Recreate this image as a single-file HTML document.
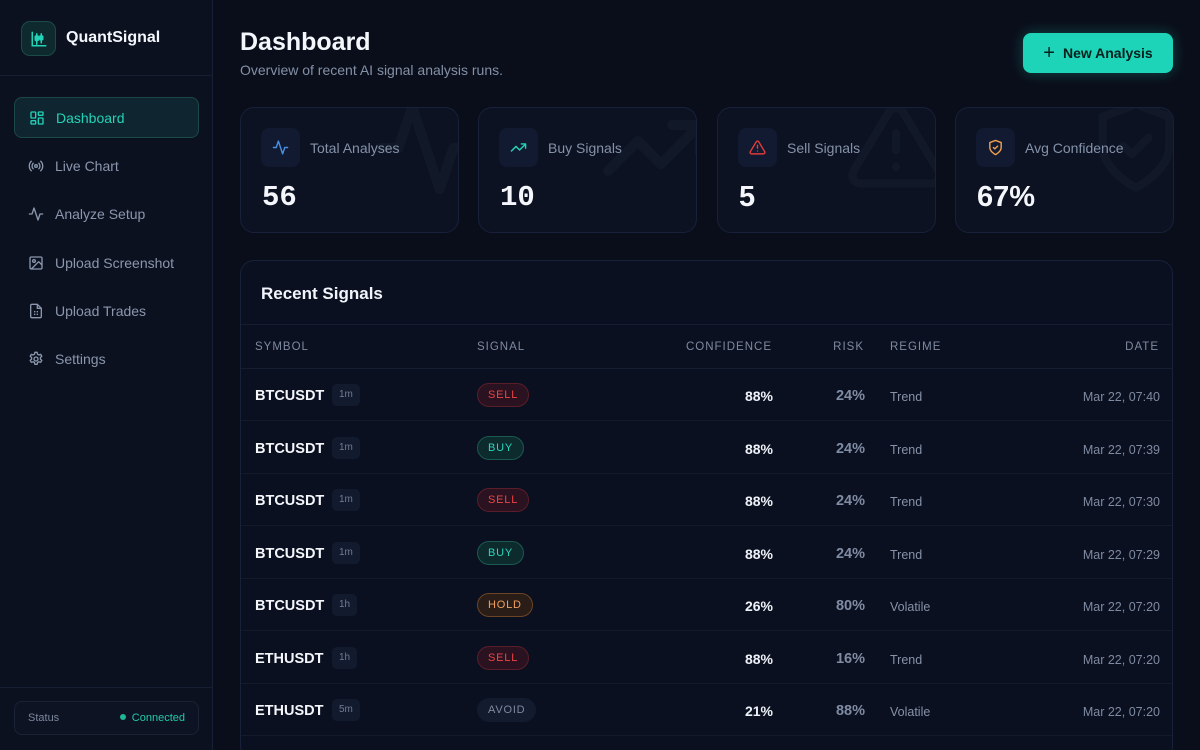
<!DOCTYPE html>
<html><head><meta charset="utf-8"><style>
*{box-sizing:border-box;margin:0;padding:0}
html,body{width:1200px;height:750px;overflow:hidden}
body{background:#0a0e1a;font-family:"Liberation Sans",sans-serif;color:#e6ebf5;position:relative}
.sb{position:absolute;left:0;top:0;width:213px;height:750px;background:#0c1120;border-right:1px solid #182036}
.logo{position:absolute;left:21px;top:21px;width:35px;height:35px;border-radius:9px;background:#0f2a2e;border:1px solid #1c4a4a;display:flex;align-items:center;justify-content:center}
.brand{position:absolute;left:66px;top:29px;font-weight:bold;font-size:16px;color:#f3f6fb}
.sep{position:absolute;left:0;top:75px;width:212px;height:1px;background:#161e32}
.nav{position:absolute;left:14px;width:185px;height:41px;display:flex;align-items:center;padding-left:14px;font-size:14px;color:#8a97ad}
.nav svg{margin-right:11px}
.nav.act{background:#0f2630;border:1px solid #1b4848;border-radius:8px;color:#22d3b8}
.status{position:absolute;left:14px;top:701px;width:185px;height:34px;border:1px solid #1a2236;border-radius:8px;background:#0d1323;font-size:11px;color:#7b879c;display:flex;align-items:center;justify-content:space-between;padding:0 13px}
.status b{font-weight:normal;color:#22c9a8}
.status b:before{content:"";display:inline-block;width:6px;height:6px;border-radius:3px;background:#1fb593;margin-right:6px;vertical-align:1px}
.sep2{position:absolute;left:0;top:687px;width:212px;height:1px;background:#161e32}
h1{position:absolute;left:240px;top:28px;font-size:25px;font-weight:bold;color:#f3f6fb}
.sub{position:absolute;left:240px;top:62px;font-size:14px;color:#8390a6}
.btn{position:absolute;left:1023px;top:33px;width:150px;height:40px;border-radius:8px;background:#1dd3b8;color:#06201c;font-weight:bold;font-size:14px;display:flex;align-items:center;justify-content:center;box-shadow:0 0 14px rgba(29,211,184,.3)}
.card{position:absolute;top:107px;width:219px;height:126px;border:1px solid #18213a;border-radius:14px;background:#0c1222;overflow:hidden}
.ic{position:absolute;left:20px;top:20px;width:39px;height:39px;border-radius:8px;background:#111a30;display:flex;align-items:center;justify-content:center}
.cl{position:absolute;left:69px;top:32px;font-size:14px;color:#8492a9}
.cv{position:absolute;left:21px;top:73px;font-size:29px;font-weight:bold;color:#f4f6fb}
.mono{font-family:"Liberation Mono",monospace}
.bg{position:absolute}
.panel{position:absolute;left:240px;top:260px;width:933px;height:500px;border:1px solid #18213a;border-radius:14px;background:#0b1020;overflow:hidden}
.pt{position:absolute;left:20px;top:23px;font-size:17px;font-weight:bold;color:#f1f4fa}
.hl{position:absolute;left:0;width:933px;height:1px;background:#151d31}
.th{position:absolute;top:80px;font-size:11.5px;letter-spacing:1px;color:#7e8aa0}
.row{position:absolute;left:0;width:933px;height:52px;border-bottom:1px solid #131a2c}
.row>*{position:absolute}
.sym{left:14px;top:19px;font-weight:bold;font-size:14.5px;color:#f4f6fb}
.tf{top:15px;height:22px;padding:0 7px;border-radius:5px;background:#121a2e;color:#6f7c93;font-size:10px;line-height:22px}
.pill{left:236px;top:14px;height:24px;padding:0 10px;border-radius:12px;font-size:11px;letter-spacing:.8px;line-height:22px;border:1px solid}
.sell{background:#2a1220;border-color:#5a1e2a;color:#ef4444}
.buy{background:#0d2a2c;border-color:#1a5a52;color:#2dd4bf}
.hold{background:#2a1c16;border-color:#6b4526;color:#f0a060}
.avoid{background:#131b2e;border-color:#131b2e;color:#7e8aa0}
.conf{right:401px;top:19px;font-weight:bold;font-size:14px;color:#eef2f8}
.risk{right:309px;top:19px;font-size:14.5px;font-weight:bold;color:#7f8ca3}
.reg{left:649px;top:21px;font-size:12.5px;color:#8592a8}
.dt{right:14px;top:21px;font-size:12.5px;color:#7e8aa0}
</style></head><body>
<div class="sb">
<div class="logo"><svg width="18" height="18" viewBox="0 0 24 24" fill="none" stroke="#22d3b8" stroke-width="2" stroke-linecap="round"><path d="M3 3v18h18"/><path d="M9 5v14M15 5v12"/><rect x="7" y="8" width="4" height="6" rx="1"/><rect x="13" y="8" width="4" height="5" rx="1"/></svg></div>
<div class="brand">QuantSignal</div>
<div class="sep"></div>
<div class="nav act" style="top:97px"><svg width="16" height="16" viewBox="0 0 24 24" fill="none" stroke="#22d3b8" stroke-width="2"><rect x="3" y="3" width="7" height="9" rx="1"/><rect x="14" y="3" width="7" height="5" rx="1"/><rect x="14" y="12" width="7" height="9" rx="1"/><rect x="3" y="16" width="7" height="5" rx="1"/></svg>Dashboard</div>
<div class="nav" style="top:145px"><svg width="16" height="16" viewBox="0 0 24 24" fill="none" stroke="#8a97ad" stroke-width="2" stroke-linecap="round"><circle cx="12" cy="12" r="2"/><path d="M16.2 7.8a6 6 0 0 1 0 8.4M7.8 16.2a6 6 0 0 1 0-8.4M19.1 4.9a10 10 0 0 1 0 14.2M4.9 19.1a10 10 0 0 1 0-14.2"/></svg>Live Chart</div>
<div class="nav" style="top:193px"><svg width="16" height="16" viewBox="0 0 24 24" fill="none" stroke="#8a97ad" stroke-width="2" stroke-linecap="round" stroke-linejoin="round"><path d="M22 12h-4l-3 9L9 3l-3 9H2"/></svg>Analyze Setup</div>
<div class="nav" style="top:242px"><svg width="16" height="16" viewBox="0 0 24 24" fill="none" stroke="#8a97ad" stroke-width="2" stroke-linejoin="round"><rect x="3" y="3" width="18" height="18" rx="2"/><circle cx="9" cy="9" r="2"/><path d="M21 15l-5-5L5 21"/></svg>Upload Screenshot</div>
<div class="nav" style="top:290px"><svg width="16" height="16" viewBox="0 0 24 24" fill="none" stroke="#8a97ad" stroke-width="2" stroke-linejoin="round"><path d="M14 2H6a2 2 0 0 0-2 2v16a2 2 0 0 0 2 2h12a2 2 0 0 0 2-2V8z"/><path d="M14 2v6h6M9 13h2M13 13h2M9 17h2M13 17h2"/></svg>Upload Trades</div>
<div class="nav" style="top:338px"><svg width="16" height="16" viewBox="0 0 24 24" fill="none" stroke="#8a97ad" stroke-width="2" stroke-linejoin="round"><circle cx="12" cy="12" r="3"/><path d="M10.3 2h3.4l.6 2.8 2 1.1 2.7-.9 1.7 2.9-2.1 1.9v2.4l2.1 1.9-1.7 2.9-2.7-.9-2 1.1-.6 2.8h-3.4l-.6-2.8-2-1.1-2.7.9-1.7-2.9 2.1-1.9v-2.4L3.3 7.9 5 5l2.7.9 2-1.1z"/></svg>Settings</div>
<div class="sep2"></div>
<div class="status"><span>Status</span><b>Connected</b></div>
</div>

<h1>Dashboard</h1>
<div class="sub">Overview of recent AI signal analysis runs.</div>
<div class="btn"><span style="font-size:20px;font-weight:normal;margin-right:8px;line-height:1">+</span>New Analysis</div>

<div class="card" style="left:240px"><svg class="bg" style="left:130px;top:-15px" width="110" height="110" viewBox="0 0 24 24" fill="none" stroke="#111828" stroke-width="2.2" stroke-linecap="round" stroke-linejoin="round"><path d="M22 12h-4l-3 9L9 3l-3 9H2"/></svg>
<div class="ic"><svg width="17" height="17" viewBox="0 0 24 24" fill="none" stroke="#4a8ee0" stroke-width="2" stroke-linecap="round" stroke-linejoin="round"><path d="M22 12h-4l-3 9L9 3l-3 9H2"/></svg></div><div class="cl">Total Analyses</div><div class="cv mono">56</div></div>
<div class="card" style="left:478px"><svg class="bg" style="left:120px;top:-15px" width="110" height="110" viewBox="0 0 24 24" fill="none" stroke="#111828" stroke-width="2.2" stroke-linecap="round" stroke-linejoin="round"><path d="M22 7l-8.5 8.5-5-5L2 17M16 7h6v6"/></svg>
<div class="ic"><svg width="17" height="17" viewBox="0 0 24 24" fill="none" stroke="#22d3b8" stroke-width="2" stroke-linecap="round" stroke-linejoin="round"><path d="M22 7l-8.5 8.5-5-5L2 17M16 7h6v6"/></svg></div><div class="cl">Buy Signals</div><div class="cv mono">10</div></div>
<div class="card" style="left:717px"><svg class="bg" style="left:128px;top:-12px" width="100" height="100" viewBox="0 0 24 24" fill="none" stroke="#111828" stroke-width="2" stroke-linecap="round" stroke-linejoin="round"><path d="M10.3 3.9L1.8 18a2 2 0 0 0 1.7 3h17a2 2 0 0 0 1.7-3L13.7 3.9a2 2 0 0 0-3.4 0zM12 9v4M12 17h.01"/></svg>
<div class="ic"><svg width="17" height="17" viewBox="0 0 24 24" fill="none" stroke="#e03a3a" stroke-width="2" stroke-linecap="round" stroke-linejoin="round"><path d="M10.3 3.9L1.8 18a2 2 0 0 0 1.7 3h17a2 2 0 0 0 1.7-3L13.7 3.9a2 2 0 0 0-3.4 0zM12 9v4M12 17h.01"/></svg></div><div class="cl">Sell Signals</div><div class="cv">5</div></div>
<div class="card" style="left:955px"><svg class="bg" style="left:130px;top:-12px" width="100" height="100" viewBox="0 0 24 24" fill="none" stroke="#111828" stroke-width="2" stroke-linecap="round" stroke-linejoin="round"><path d="M12 22s8-4 8-10V5l-8-3-8 3v7c0 6 8 10 8 10z"/><path d="M9 12l2 2 4-4"/></svg>
<div class="ic"><svg width="17" height="17" viewBox="0 0 24 24" fill="none" stroke="#f0a050" stroke-width="2" stroke-linecap="round" stroke-linejoin="round"><path d="M12 22s8-4 8-10V5l-8-3-8 3v7c0 6 8 10 8 10z"/><path d="M9 12l2 2 4-4"/></svg></div><div class="cl">Avg Confidence</div><div class="cv">67%</div></div>

<div class="panel">
<div class="pt">Recent Signals</div>
<div class="hl" style="top:63px"></div>
<div class="th" style="left:14px">SYMBOL</div>
<div class="th" style="left:236px">SIGNAL</div>
<div class="th" style="right:400px">CONFIDENCE</div>
<div class="th" style="right:308px">RISK</div>
<div class="th" style="left:649px">REGIME</div>
<div class="th" style="right:13px">DATE</div>
<div class="hl" style="top:107px"></div>

<div class="row" style="top:108px"><div class="sym">BTCUSDT</div><div class="tf" style="left:91px">1m</div><div class="pill sell">SELL</div><div class="conf">88%</div><div class="risk">24%</div><div class="reg">Trend</div><div class="dt">Mar 22, 07:40</div></div>
<div class="row" style="top:161px"><div class="sym">BTCUSDT</div><div class="tf" style="left:91px">1m</div><div class="pill buy">BUY</div><div class="conf">88%</div><div class="risk">24%</div><div class="reg">Trend</div><div class="dt">Mar 22, 07:39</div></div>
<div class="row" style="top:213px"><div class="sym">BTCUSDT</div><div class="tf" style="left:91px">1m</div><div class="pill sell">SELL</div><div class="conf">88%</div><div class="risk">24%</div><div class="reg">Trend</div><div class="dt">Mar 22, 07:30</div></div>
<div class="row" style="top:266px"><div class="sym">BTCUSDT</div><div class="tf" style="left:91px">1m</div><div class="pill buy">BUY</div><div class="conf">88%</div><div class="risk">24%</div><div class="reg">Trend</div><div class="dt">Mar 22, 07:29</div></div>
<div class="row" style="top:318px"><div class="sym">BTCUSDT</div><div class="tf" style="left:91px">1h</div><div class="pill hold">HOLD</div><div class="conf">26%</div><div class="risk">80%</div><div class="reg">Volatile</div><div class="dt">Mar 22, 07:20</div></div>
<div class="row" style="top:371px"><div class="sym">ETHUSDT</div><div class="tf" style="left:91px">1h</div><div class="pill sell">SELL</div><div class="conf">88%</div><div class="risk">16%</div><div class="reg">Trend</div><div class="dt">Mar 22, 07:20</div></div>
<div class="row" style="top:423px"><div class="sym">ETHUSDT</div><div class="tf" style="left:91px">5m</div><div class="pill avoid">AVOID</div><div class="conf">21%</div><div class="risk">88%</div><div class="reg">Volatile</div><div class="dt">Mar 22, 07:20</div></div>
</div>
</body></html>
